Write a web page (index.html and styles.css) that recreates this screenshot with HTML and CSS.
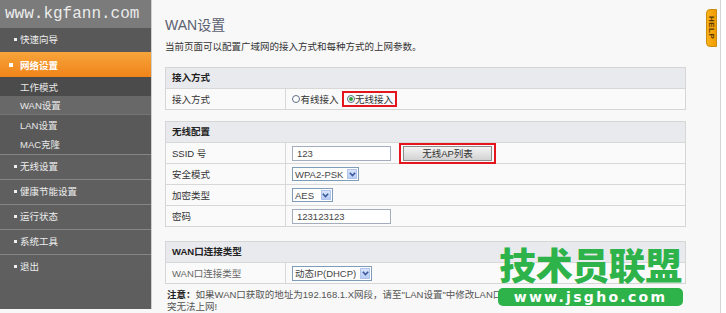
FILE: index.html
```html
<!DOCTYPE html>
<html lang="zh-CN">
<head>
<meta charset="utf-8">
<title>WAN设置</title>
<link rel="stylesheet" href="styles.css">
</head>
<body>
<div class="page">
  <aside class="side">
    <div class="brand">www.kgfann.com</div>
    <div class="nav main first"><span class="dot"></span>快速向导</div>
    <div class="nav main active"><span class="dot sq"></span>网络设置</div>
    <div class="nav sub s1">工作模式</div>
    <div class="nav sub s2">WAN设置</div>
    <div class="nav sub s3">LAN设置</div>
    <div class="nav sub s4">MAC克隆</div>
    <div class="nav main sep"><span class="dot"></span>无线设置</div>
    <div class="nav main sep"><span class="dot"></span>健康节能设置</div>
    <div class="nav main sep"><span class="dot"></span>运行状态</div>
    <div class="nav main sep"><span class="dot"></span>系统工具</div>
    <div class="nav main sep"><span class="dot"></span>退出</div>
  </aside>

  <main class="content">
    <h1 class="title">WAN设置</h1>
    <p class="desc">当前页面可以配置广域网的接入方式和每种方式的上网参数。</p>

    <section class="box">
      <div class="head">接入方式</div>
      <div class="row">
        <div class="lbl">接入方式</div>
        <div class="val">
          <span class="radio"></span><span class="rtext">有线接入</span>
          <span class="hl hl-radio"><span class="radio on"></span><span class="rtext">无线接入</span></span>
        </div>
      </div>
    </section>

    <section class="box box2">
      <div class="head">无线配置</div>
      <div class="row">
        <div class="lbl">SSID 号</div>
        <div class="val">
          <span class="input">123</span>
          <span class="hl hl-btn"><span class="btn">无线AP列表</span></span>
        </div>
      </div>
      <div class="row">
        <div class="lbl">安全模式</div>
        <div class="val">
          <span class="sel"><span class="sel-text">WPA2-PSK</span><span class="sel-btn"><svg width="7" height="5" viewBox="0 0 7 5"><path d="M0.8 0.8 L3.5 3.6 L6.2 0.8" fill="none" stroke="#3a5a9c" stroke-width="1.6"/></svg></span></span>
        </div>
      </div>
      <div class="row">
        <div class="lbl">加密类型</div>
        <div class="val">
          <span class="sel"><span class="sel-text">AES&nbsp;</span><span class="sel-btn"><svg width="7" height="5" viewBox="0 0 7 5"><path d="M0.8 0.8 L3.5 3.6 L6.2 0.8" fill="none" stroke="#3a5a9c" stroke-width="1.6"/></svg></span></span>
        </div>
      </div>
      <div class="row">
        <div class="lbl">密码</div>
        <div class="val"><span class="input">123123123</span></div>
      </div>
    </section>

    <section class="box box3">
      <div class="head">WAN口连接类型</div>
      <div class="row">
        <div class="lbl light">WAN口连接类型</div>
        <div class="val">
          <span class="sel tall"><span class="sel-text">动态IP(DHCP)</span><span class="sel-btn"><svg width="7" height="5" viewBox="0 0 7 5"><path d="M0.8 0.8 L3.5 3.6 L6.2 0.8" fill="none" stroke="#3a5a9c" stroke-width="1.6"/></svg></span></span>
        </div>
      </div>
    </section>

    <p class="note"><b>注意：</b>如果WAN口获取的地址为192.168.1.X网段，请至"LAN设置"中修改LAN口IP地址，否则可能会导致IP地址冲<br>突无法上网!</p>

    <div class="wm">
      <div class="wm-big">技术员联盟</div>
      <div class="wm-pill">www.jsgho.com</div>
    </div>
  </main>

  <div class="rightbar"></div>
  <div class="help">HELP</div>
</div>
</body>
</html>
```

FILE: styles.css
```css
* { box-sizing: border-box; }
html, body { margin: 0; padding: 0; }
body {
  width: 726px;
  height: 313px;
  overflow: hidden;
  background: #f8f8f8;
  font-family: "Liberation Sans", "Noto Sans CJK SC", sans-serif;
  font-size: 9.5px;
  color: #333;
}
.page {
  display: flex;
  height: 313px;
  position: relative;
}

/* sidebar */
.side {
  width: 152px;
  height: 309px;
  background: #5e5e5e;
  border-right: 1px solid #cfcfcf;
  flex: none;
}
.brand {
  height: 28px;
  background: #7b7b7b;
  color: #ececec;
  font-family: "Liberation Mono", monospace;
  font-size: 16px;
  line-height: 28px;
  padding-left: 5px;
}
.nav {
  display: flex;
  align-items: center;
  color: #eeeeee;
}
.nav.main {
  height: 25px;
  padding-left: 14px;
  padding-bottom: 2px;
}
.nav.main.first { height: 24px; background: #585858; }
.nav.main.sep { border-top: 1px solid #858585; background: #5f5f5f; }
.nav.main.active {
  height: 25px;
  padding-left: 9px;
  padding-bottom: 0;
  background: linear-gradient(#f7a43a, #f0841a);
  color: #fff;
  font-weight: bold;
}
.dot {
  width: 3px;
  height: 3px;
  background: #f0f0f0;
  margin-right: 3px;
  flex: none;
}
.dot.sq { width: 4px; height: 4px; background: #fff; margin-right: 7px; }
.nav.sub { padding-left: 20px; color: #e8e8e8; }
.nav.s1 { height: 19px; background: #4b4b4b; }
.nav.s2 { height: 18px; background: #686868; }
.nav.s3 { height: 20px; background: #595959; border-top: 1px solid #737373; }
.nav.s4 { height: 20px; background: #595959; }

/* content */
.content {
  flex: 1;
  position: relative;
  padding: 0 0 0 13px;
}
.title {
  margin: 15px 0 0 0;
  font-size: 14px;
  line-height: 20px;
  font-weight: normal;
  color: #5b6070;
}
.desc {
  margin: 6px 0 0 0;
  line-height: 12px;
}
.box {
  width: 521px;
  margin-top: 14px;
  border: 1px solid #d6d6d6;
  background: #fafafa;
}
.box2 { margin-top: 11px; }
.box3 { margin-top: 14px; }
.head {
  height: 20px;
  line-height: 20px;
  background: #e9eaee;
  font-weight: bold;
  color: #222;
  padding-left: 6px;
}
.row {
  display: flex;
  height: 21px;
  border-top: 1px solid #d8d8d8;
}
.lbl {
  width: 120px;
  border-right: 1px solid #d8d8d8;
  padding-left: 6px;
  display: flex;
  align-items: center;
  color: #333;
}
.lbl.light { color: #666; }
.val {
  display: flex;
  align-items: center;
  padding-left: 6px;
}
.radio {
  width: 8px;
  height: 8px;
  border-radius: 50%;
  border: 1px solid #5e6e86;
  background: #fff;
  display: inline-flex;
  align-items: center;
  justify-content: center;
  flex: none;
}
.radio.on::after {
  content: "";
  width: 4px;
  height: 4px;
  border-radius: 50%;
  background: #2f9e3a;
}
.rtext { margin-left: 0.5px; color: #333; }
.hl {
  display: inline-flex;
  align-items: center;
  border: 2px solid #e3161e;
}
.hl-radio {
  margin-left: 3px;
  height: 16px;
  padding: 0 2px 0 3px;
}
.input {
  display: inline-flex;
  align-items: center;
  width: 99px;
  height: 15px;
  border: 1px solid #a3adbd;
  background: #fff;
  padding-left: 4px;
  color: #444;
}
.hl-btn {
  margin-left: 8px;
  padding: 1px 2px;
  height: 21px;
}
.btn {
  display: inline-flex;
  align-items: center;
  justify-content: center;
  width: 89px;
  height: 15px;
  border: 1px solid #8c8c8c;
  background: linear-gradient(#f4f4f4, #d2d2d2);
  color: #333;
}
.sel {
  display: inline-flex;
  align-items: stretch;
  height: 14px;
  border: 1px solid #7f9db9;
  background: #fff;
  white-space: nowrap;
}
.sel.tall { height: 15px; }
.sel-text {
  padding: 0 3px 0 2px;
  display: flex;
  align-items: center;
  color: #444;
}
.sel-btn {
  width: 10px;
  margin: 1px;
  background: linear-gradient(#d9e4fb, #b7cbf3);
  border: 1px solid #b0c4ec;
  display: flex;
  align-items: center;
  justify-content: center;
}
.note {
  margin: 5px 0 0 2px;
  line-height: 11.5px;
  color: #555;
  white-space: nowrap;
}
.note b { color: #222; }

/* watermark overlay */
.wm {
  position: absolute;
  left: 346px;
  top: 243px;
  width: 185px;
  display: flex;
  flex-direction: column;
  align-items: center;
}
.wm-big {
  font-family: "Noto Sans CJK SC", sans-serif;
  font-weight: 900;
  font-size: 37px;
  line-height: 42px;
  color: #2db34a;
  letter-spacing: -0.5px;
  white-space: nowrap;
}
.wm-pill {
  margin-top: 3px;
  width: 185px;
  height: 18px;
  border-radius: 5px;
  background: #2db34a;
  color: #fff;
  font-family: "DejaVu Sans", sans-serif;
  font-weight: bold;
  font-size: 14px;
  line-height: 18px;
  letter-spacing: 2.3px;
  text-align: center;
}

/* right edge */
.rightbar {
  width: 6px;
  flex: none;
  border-left: 1px solid #d4d4d4;
  background: #fff;
}
.help {
  position: absolute;
  left: 706px;
  top: 9px;
  width: 11px;
  height: 38px;
  background: linear-gradient(90deg, #f9b21a, #f39c00);
  border: 1px solid #c98b10;
  border-radius: 4px 0 0 4px;
  writing-mode: vertical-rl;
  font-size: 8px;
  font-weight: bold;
  color: #5a3a00;
  display: flex;
  align-items: center;
  justify-content: center;
  letter-spacing: 0.5px;
}
```
